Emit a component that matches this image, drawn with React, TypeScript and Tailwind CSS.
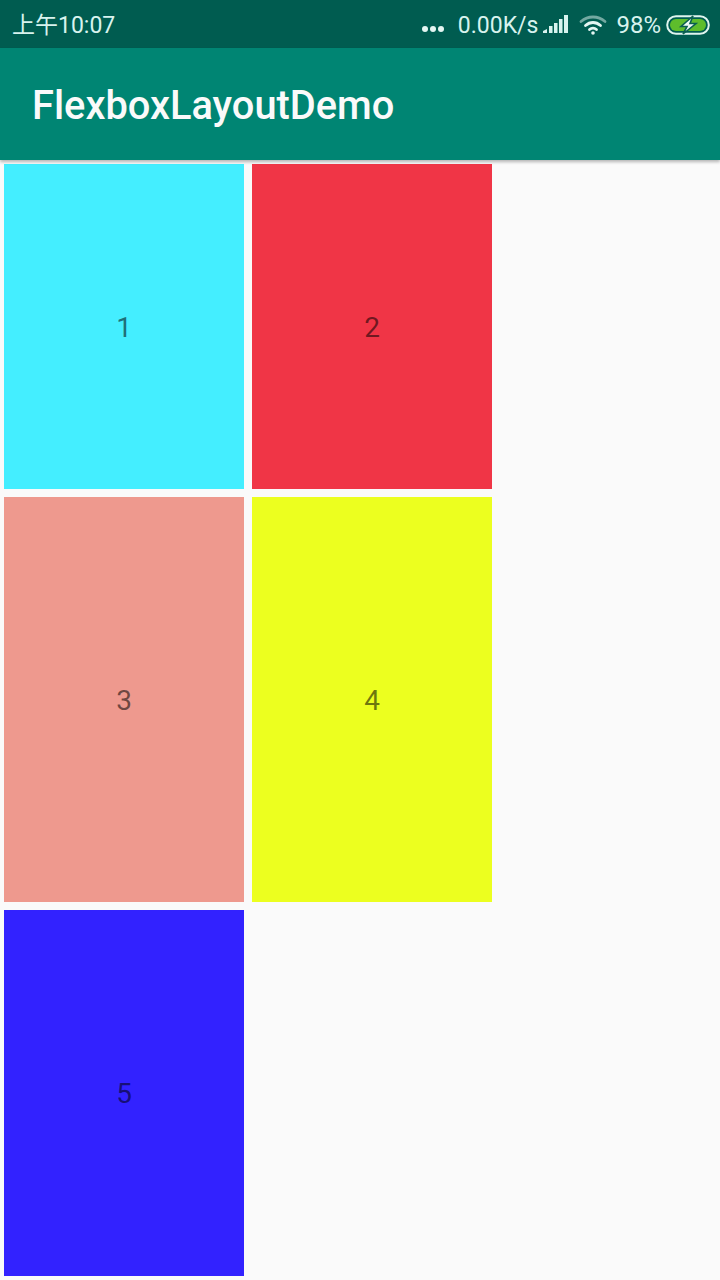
import React from 'react';

const tiles = [
  { label: '1', height: 'h-[325px]', color: 'bg-[#44eeff]' },
  { label: '2', height: 'h-[325px]', color: 'bg-[#f03546]' },
  { label: '3', height: 'h-[405px]', color: 'bg-[#ee998e]' },
  { label: '4', height: 'h-[405px]', color: 'bg-[#ecff1f]' },
  { label: '5', height: 'h-[366px]', color: 'bg-[#3222ff]' },
];

function SignalIcon() {
  return (
    <svg width="26" height="20" viewBox="0 0 26 20" className="ml-[5px]" fill="#d8f3ee">
      <path d="M0 18V16L4 14V18Z" />
      <rect x="6" y="11" width="3.5" height="7" />
      <rect x="11" y="8" width="3.5" height="10" />
      <rect x="16" y="4" width="3.5" height="14" />
      <rect x="21" y="0" width="4" height="18" />
    </svg>
  );
}

function WifiIcon() {
  return (
    <svg width="28" height="22" viewBox="0 0 28 22" fill="none" stroke="#e4f6f2" strokeWidth="2.8" strokeLinecap="round">
      <path d="M2 7.5C9 1.5 19 1.5 26 7.5" opacity="0.5" />
      <path d="M6.5 11.5C11 7.5 17 7.5 21.5 11.5" />
      <path d="M10.5 15.5C12.5 13.8 15.5 13.8 17.5 15.5" />
      <circle cx="14" cy="19" r="1.8" fill="#e4f6f2" stroke="none" />
    </svg>
  );
}

function BatteryIcon() {
  return (
    <svg width="44" height="20" viewBox="0 0 44 20" className="ml-[5px]">
      <rect x="1.2" y="1.2" width="41.6" height="17.6" rx="8.8" fill="none" stroke="#dff5ef" strokeWidth="2" />
      <rect x="4" y="4" width="36" height="12" rx="6" fill="#5ebd2c" />
      <path d="M27 1L15 11.5H21L17 19L30 8.5H24Z" fill="#eefaf6" stroke="#0a5f50" strokeWidth="1.6" />
    </svg>
  );
}

function StatusBar() {
  return (
    <div className="flex h-12 shrink-0 items-center justify-between bg-[#005c50] pl-3 pr-[10px] pt-[2px] text-[#d8f3ee]">
      <span className="text-[23px] leading-none font-['Roboto','Noto_Sans_CJK_SC',sans-serif]">上午10:07</span>
      <div className="flex items-center">
        <div className="mr-[14px] mt-2 flex gap-[2px]">
          <span className="h-[6px] w-[6px] rounded-full bg-[#e4f6f2]" />
          <span className="h-[6px] w-[6px] rounded-full bg-[#e4f6f2]" />
          <span className="h-[6px] w-[6px] rounded-full bg-[#e4f6f2]" />
        </div>
        <span className="text-[23px] leading-none">0.00K/s</span>
        <SignalIcon />
        <span className="w-[10px]" />
        <WifiIcon />
        <span className="ml-[9px] text-[24px] leading-none">98%</span>
        <BatteryIcon />
      </div>
    </div>
  );
}

export default function App() {
  return (
    <div className="flex h-[1280px] w-[720px] flex-col overflow-hidden bg-[#fafafa] font-['Roboto',sans-serif]">
      <StatusBar />
      <div className="relative z-10 flex h-[112px] shrink-0 items-center bg-[#008573] pl-8 pt-[3px] shadow-[0_2px_3px_rgba(0,0,0,0.28)]">
        <h1 className="text-[39.8px] leading-none font-medium text-[#fafafa]">FlexboxLayoutDemo</h1>
      </div>
      <div className="flex w-[496px] flex-wrap">
        {tiles.map((tile) => (
          <div
            key={tile.label}
            className={`m-1 flex w-[240px] items-center justify-center pt-[2px] text-[28px] leading-none text-black/55 ${tile.height} ${tile.color}`}
          >
            {tile.label}
          </div>
        ))}
      </div>
    </div>
  );
}
